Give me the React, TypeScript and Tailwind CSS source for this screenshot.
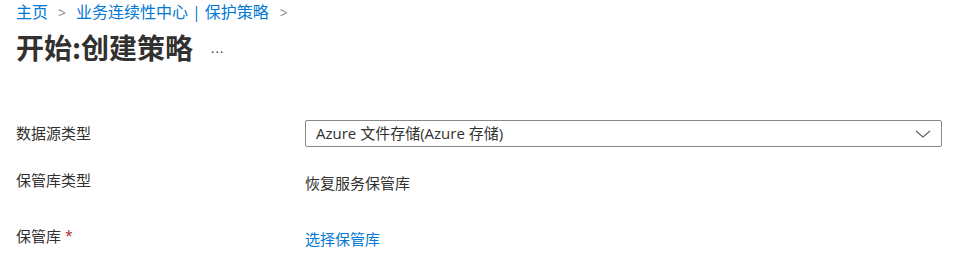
import React from 'react';

const font = "font-['Segoe_UI','Open_Sans','Noto_Sans_CJK_SC',sans-serif]";

function Chevron() {
  return (
    <svg width="16" height="8" viewBox="0 0 16 8" fill="none" className="shrink-0">
      <path d="M1 1l7 6 7-6" stroke="#605e5c" strokeWidth="1.1" />
    </svg>
  );
}

export default function App() {
  return (
    <div className={`${font} w-[955px] h-[272px] bg-white text-[#323130] overflow-hidden`}>
      <div className="pl-4 pr-[13px]">
        {/* breadcrumb */}
        <div className="h-6 flex items-center text-[16px] text-[#0078d4]">
          <span>主页</span>
          <span className="mx-[10px] text-[#8a8886] text-[14px]">&gt;</span>
          <span>业务连续性中心</span>
          <span className="mx-[4px] font-['Open_Sans',sans-serif]">|</span>
          <span>保护策略</span>
          <span className="ml-[11px] text-[#8a8886] text-[14px]">&gt;</span>
        </div>

        {/* title */}
        <div className="h-[46px] flex items-center">
          <h1 className="text-[28px] font-bold leading-none text-[#323130] font-['Noto_Sans_CJK_SC',sans-serif]">
            开始:创建策略
          </h1>
          <span className="ml-[18px] mt-[4px] text-[13px] tracking-[1px] text-[#323130]">...</span>
        </div>

        {/* form */}
        <div className="mt-[50px] text-[15px]">
          <div className="flex items-center h-[27px]">
            <div className="w-[289px] shrink-0">数据源类型</div>
            <div className="flex-1 h-[27px] border border-[#8a8886] rounded-[2px] flex items-center justify-between pl-[10px] pr-[10px]">
              <span>Azure 文件存储(Azure 存储)</span>
              <Chevron />
            </div>
          </div>

          <div className="flex items-start mt-[23px] h-[56px]">
            <div className="w-[289px] shrink-0 leading-5">保管库类型</div>
            <div className="pt-[3px] leading-5">恢复服务保管库</div>
          </div>

          <div className="flex items-start leading-5">
            <div className="w-[289px] shrink-0 flex items-start">
              保管库
              <span className="ml-[4px] text-[#a4262c] text-[14px]">*</span>
            </div>
            <div className="pt-[3px] text-[#0078d4]">选择保管库</div>
          </div>
        </div>
      </div>
    </div>
  );
}
